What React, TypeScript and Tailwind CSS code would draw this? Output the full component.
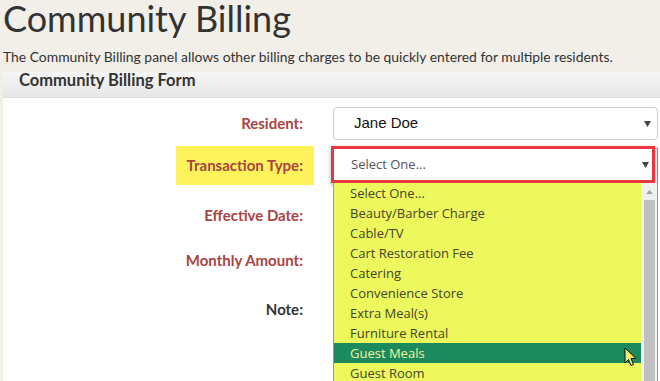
import React from "react";

const items = [
  "Select One...",
  "Beauty/Barber Charge",
  "Cable/TV",
  "Cart Restoration Fee",
  "Catering",
  "Convenience Store",
  "Extra Meal(s)",
  "Furniture Rental",
  "Guest Meals",
  "Guest Room",
  "Housekeeping",
];

function Caret() {
  return (
    <svg width="7" height="6" viewBox="0 0 7 6" className="block">
      <path d="M0 0 L7 0 L3.5 6 Z" fill="#444" />
    </svg>
  );
}

function Cursor() {
  return (
    <svg width="13" height="20" viewBox="0 0 13 20" className="block">
      <path
        d="M1 1 L1 16 L4.5 12.5 L7 18.5 L9.5 17.5 L7 11.5 L12 11.5 Z"
        fill="#f1f36c"
        stroke="#111"
        strokeWidth="1"
        strokeLinejoin="miter"
      />
    </svg>
  );
}

export default function App() {
  return (
    <div className="w-[660px] h-[381px] overflow-hidden bg-[#f2efe9] font-['Lato',sans-serif] text-[#333]">
      <h1 className="pl-[3px] text-[36px] leading-[36px] font-normal text-[#333]">Community Billing</h1>
      <p className="pl-[3px] mt-[11px] text-[13.9px] leading-[20px] text-[#333]">
        The Community Billing panel allows other billing charges to be quickly entered for multiple residents.
      </p>
      <div className="ml-[3px] mt-[5px] w-[680px] bg-white">
        <div className="h-[26px] border-b border-[#dddddd] bg-gradient-to-b from-[#f5f5f5] to-[#e6e6e6] pl-[16px]">
          <div className="text-[16.5px] leading-[16px] font-bold text-[#333]">Community Billing Form</div>
        </div>
        <div className="pt-[9px] h-[300px] flex flex-col">
          {/* Resident */}
          <div className="flex items-center gap-[30px]">
            <div className="w-[300px] flex justify-end">
              <span className="text-[15px] font-bold text-[#a94442]">Resident:</span>
            </div>
            <div className="w-[325px] h-[33px] rounded-[4px] border border-[#cccccc] bg-white flex items-center justify-between pl-[20px] pr-[6px]">
              <span className="font-['Liberation_Sans',Arial,sans-serif] text-[15px] text-[#111]">Jane Doe</span>
              <Caret />
            </div>
          </div>
          {/* Transaction Type */}
          <div className="flex items-start gap-[30px] mt-[6px]">
            <div className="w-[300px] flex justify-end">
              <span className="mr-[-11px] h-[39px] px-[11px] flex items-center bg-[#fff35c] text-[15px] font-bold text-[#a94442]">
                Transaction Type:
              </span>
            </div>
            <div className="relative w-[325px] h-[37px]">
              <div className="absolute left-0 top-[2px] w-[325px] h-[36px] border border-[#7a9cd6] bg-white" />
              <div className="absolute left-[-2px] top-0 w-[324px] h-[37px] border-[3px] border-[#e8383d] bg-white shadow-[0_2px_4px_rgba(0,0,0,0.35)] flex items-center justify-between pl-[17px] pr-[3px]">
                <span className="font-['Open_Sans',sans-serif] text-[13px] text-[#555]">Select One...</span>
                <Caret />
              </div>
              {/* Dropdown list */}
              <div className="absolute left-0 top-[37px] w-[325px] h-[215px] border-x border-[#7a9cd6] bg-white flex z-10">
                <div className="flex-1 bg-[#ecf85b]">
                  {items.map((it) => (
                    <div
                      key={it}
                      className={
                        it === "Guest Meals"
                          ? "relative h-[20px] leading-[20px] pl-[16px] bg-[#1d8a5e] text-[#eef59c] font-['Open_Sans',sans-serif] text-[13px]"
                          : "h-[20px] leading-[20px] pl-[16px] text-[#45452e] font-['Open_Sans',sans-serif] text-[13px]"
                      }
                    >
                      {it}
                      {it === "Guest Meals" && (
                        <div className="absolute left-[290px] top-[4px]">
                          <Cursor />
                        </div>
                      )}
                    </div>
                  ))}
                </div>
                <div className="w-[16px] bg-[#f0f0f0] flex flex-col items-center">
                  <div className="h-[17px] flex items-center justify-center">
                    <svg width="7" height="4" viewBox="0 0 7 4" className="block">
                      <path d="M0 4 L7 4 L3.5 0 Z" fill="#a3a3a3" />
                    </svg>
                  </div>
                  <div className="w-[11px] flex-1 bg-[#c1c1c1]" />
                </div>
              </div>
            </div>
          </div>
          {/* Effective Date */}
          <div className="flex items-center gap-[30px] mt-[13px] h-[34px]">
            <div className="w-[300px] flex justify-end">
              <span className="text-[15px] font-bold text-[#a94442]">Effective Date:</span>
            </div>
          </div>
          <div className="flex items-center gap-[30px] mt-[11px] h-[34px]">
            <div className="w-[300px] flex justify-end">
              <span className="text-[15px] font-bold text-[#a94442]">Monthly Amount:</span>
            </div>
          </div>
          <div className="flex items-center gap-[30px] mt-[15px] h-[34px]">
            <div className="w-[300px] flex justify-end">
              <span className="text-[15px] font-bold text-[#333]">Note:</span>
            </div>
          </div>
        </div>
      </div>
    </div>
  );
}
